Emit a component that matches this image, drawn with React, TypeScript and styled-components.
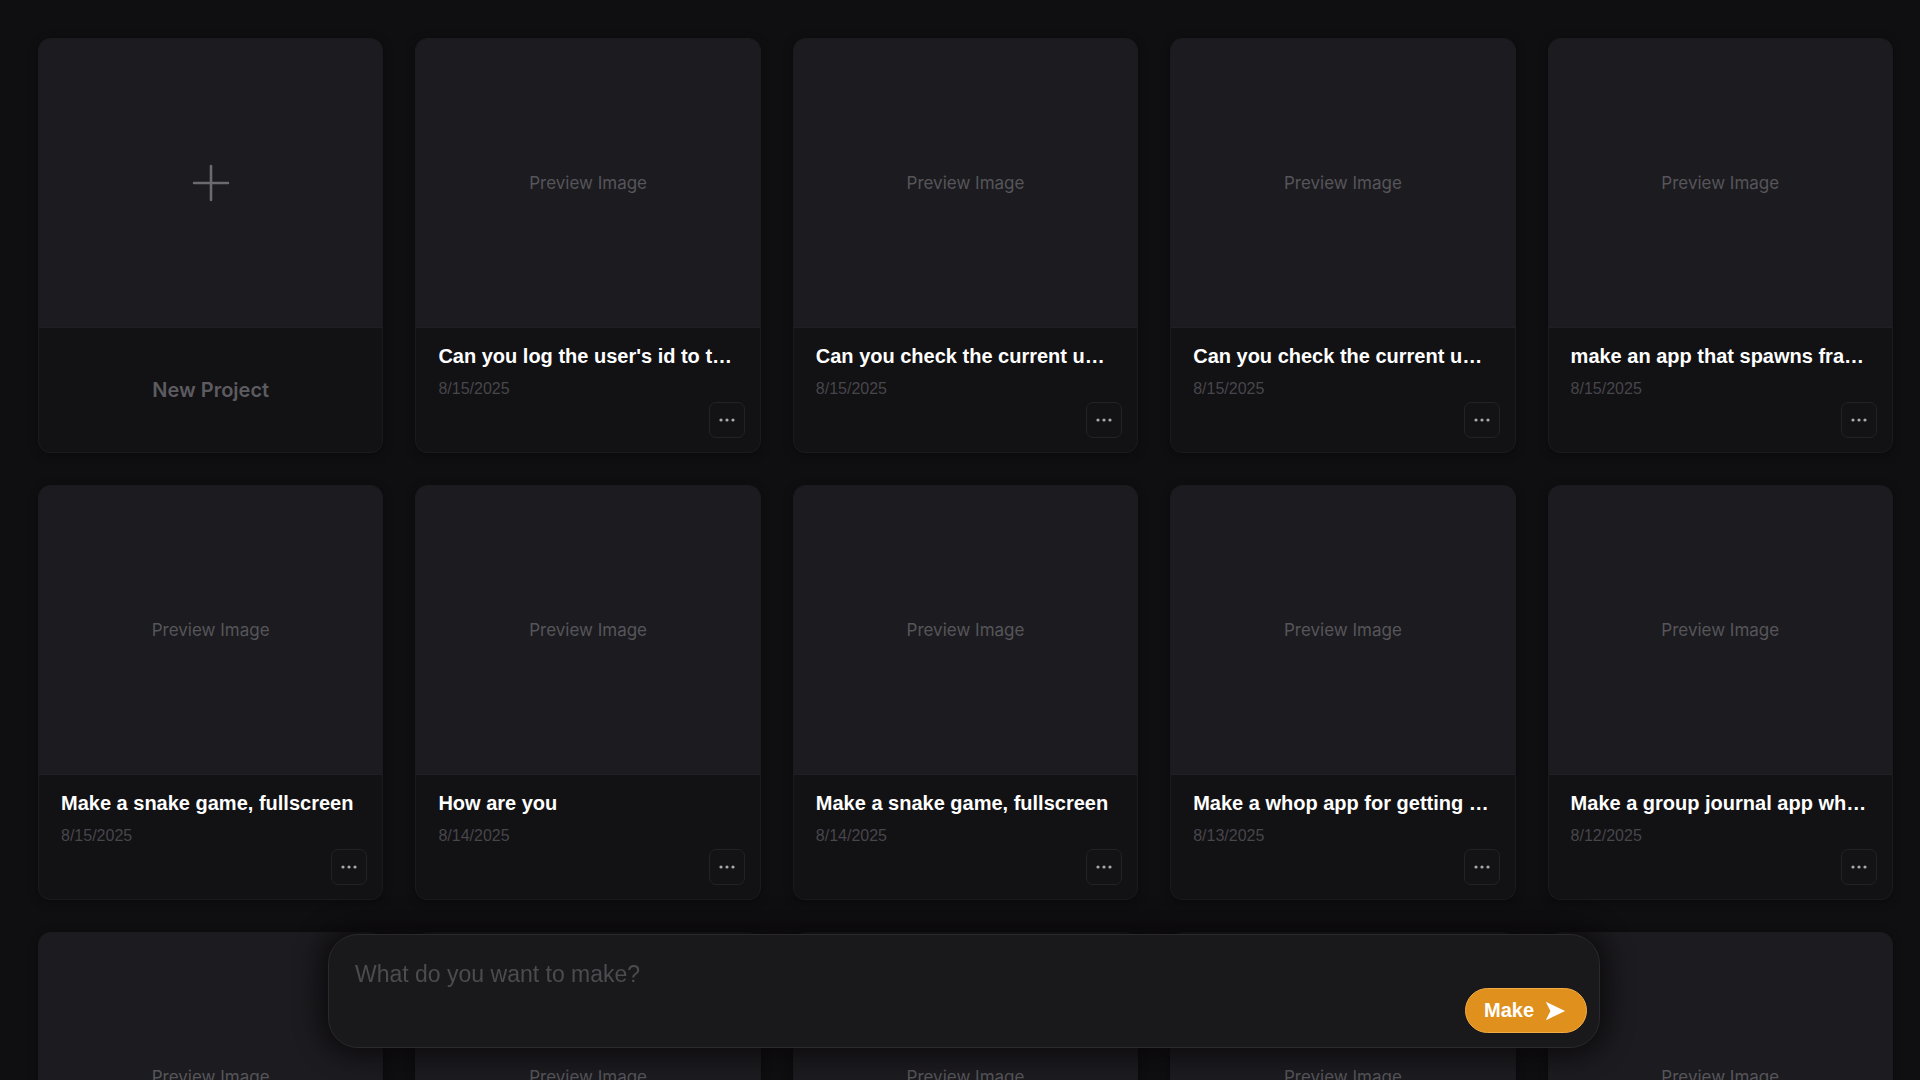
import React from "react";
import styled, { createGlobalStyle } from "styled-components";

const GlobalStyle = createGlobalStyle`
  html, body {
    margin: 0;
    padding: 0;
    background: #0f0e11;
    font-family: "Liberation Sans", Arial, sans-serif;
  }
  * { box-sizing: border-box; }
`;

const Page = styled.div`
  min-height: 100vh;
  padding: 38px 27px 160px 38px;
  background: #0f0e11;
`;

const Grid = styled.div`
  display: grid;
  grid-template-columns: repeat(5, 1fr);
  gap: 32px;
`;

const Card = styled.div`
  height: 415px;
  display: flex;
  flex-direction: column;
  border-radius: 12px;
  overflow: hidden;
  border: 1px solid #1b1a1e;
  background: #121114;
  box-shadow: 0 2px 10px rgba(0, 0, 0, 0.35);
`;

const Preview = styled.div`
  height: 289px;
  flex-shrink: 0;
  display: flex;
  align-items: center;
  justify-content: center;
  background: #1c1b1f;
  border-bottom: 1px solid #211f24;
  color: #56555a;
  font-family: Inter, "Noto Sans", sans-serif;
  font-size: 17px;
`;

const Footer = styled.div<{ $center?: boolean }>`
  flex: 1;
  display: flex;
  flex-direction: column;
  min-width: 0;
  padding: ${(p) => (p.$center ? "16px" : "16px 15px 16px 22px")};
  justify-content: ${(p) => (p.$center ? "center" : "flex-start")};
  align-items: ${(p) => (p.$center ? "center" : "stretch")};
`;

const Title = styled.div`
  color: #ffffff;
  font-weight: 700;
  font-size: 20px;
  line-height: 24px;
  padding-right: 7px;
  white-space: nowrap;
  overflow: hidden;
  text-overflow: ellipsis;
`;

const DateText = styled.div`
  margin-top: 11px;
  color: #47464b;
  font-size: 16px;
  line-height: 20px;
`;

const Actions = styled.div`
  margin-top: 3px;
  display: flex;
  justify-content: flex-end;
`;

const MenuButton = styled.button`
  width: 36px;
  height: 36px;
  display: flex;
  align-items: center;
  justify-content: center;
  padding: 0;
  border-radius: 7px;
  border: 1px solid #232226;
  background: #131215;
  cursor: pointer;
`;

const NewLabel = styled.div`
  color: #5c5b60;
  font-family: Inter, "Noto Sans", sans-serif;
  font-weight: 600;
  font-size: 20px;
`;

const Composer = styled.div`
  position: fixed;
  left: 328px;
  width: 1272px;
  bottom: 32px;
  height: 114px;
  border-radius: 30px;
  background: #19181b;
  border: 1px solid #2a292d;
  box-shadow: 0 0 24px 8px rgba(8, 7, 10, 0.75);
  display: flex;
  flex-direction: column;
  padding: 26px 12px 15px 26px;
`;

const Input = styled.input`
  border: none;
  outline: none;
  background: transparent;
  color: #ddd;
  font-family: "Liberation Sans", Arial, sans-serif;
  font-size: 23px;
  padding: 0;
  height: 28px;
  &::placeholder {
    color: #4c4b50;
  }
`;

const ComposerActions = styled.div`
  margin-top: auto;
  display: flex;
  justify-content: flex-end;
`;

const MakeButton = styled.button`
  height: 45px;
  width: 122px;
  border-radius: 23px;
  border: 1.5px solid #f2ac45;
  background: #e0901c;
  color: #fff;
  font-family: "Liberation Sans", Arial, sans-serif;
  font-weight: 700;
  font-size: 20px;
  display: flex;
  align-items: center;
  justify-content: center;
  gap: 10px;
  cursor: pointer;
  padding: 0 2px 0 0;
`;

function Dots() {
  return (
    <svg width="16" height="4" viewBox="0 0 16 4">
      <circle cx="2" cy="2" r="1.6" fill="#a9a8ad" />
      <circle cx="8" cy="2" r="1.6" fill="#a9a8ad" />
      <circle cx="14" cy="2" r="1.6" fill="#a9a8ad" />
    </svg>
  );
}

function PlusIcon() {
  return (
    <svg width="38" height="38" viewBox="0 0 38 38">
      <path d="M19 2v34M2 19h34" stroke="#6b6a6f" strokeWidth="2.6" strokeLinecap="round" />
    </svg>
  );
}

function SendIcon() {
  return (
    <svg width="22" height="22" viewBox="0 0 24 24">
      <path d="M2 2 L23 12 L2 22 L7 12 Z" fill="#fff" />
    </svg>
  );
}

const projects = [
  { title: "Can you log the user's id to the console when they open it", date: "8/15/2025" },
  { title: "Can you check the current user's access level", date: "8/15/2025" },
  { title: "Can you check the current user's plan", date: "8/15/2025" },
  { title: "make an app that spawns fractals on click", date: "8/15/2025" },
  { title: "Make a snake game, fullscreen", date: "8/15/2025" },
  { title: "How are you", date: "8/14/2025" },
  { title: "Make a snake game, fullscreen", date: "8/14/2025" },
  { title: "Make a whop app for getting feedback", date: "8/13/2025" },
  { title: "Make a group journal app where members post", date: "8/12/2025" },
  { title: "Make a todo list", date: "8/11/2025" },
  { title: "Make a leaderboard app", date: "8/11/2025" },
  { title: "Build a quiz game", date: "8/10/2025" },
  { title: "Make a chat room", date: "8/10/2025" },
  { title: "Make a countdown timer", date: "8/9/2025" },
];

function ProjectCard({ title, date }: { title: string; date: string }) {
  return (
    <Card>
      <Preview>Preview Image</Preview>
      <Footer>
        <Title>{title}</Title>
        <DateText>{date}</DateText>
        <Actions>
          <MenuButton aria-label="More">
            <Dots />
          </MenuButton>
        </Actions>
      </Footer>
    </Card>
  );
}

export default function App() {
  return (
    <>
      <GlobalStyle />
      <Page>
        <Grid>
          <Card>
            <Preview>
              <PlusIcon />
            </Preview>
            <Footer $center>
              <NewLabel>New Project</NewLabel>
            </Footer>
          </Card>
          {projects.map((p, i) => (
            <ProjectCard key={i} title={p.title} date={p.date} />
          ))}
        </Grid>
      </Page>
      <Composer>
        <Input placeholder="What do you want to make?" />
        <ComposerActions>
          <MakeButton>
            Make
            <SendIcon />
          </MakeButton>
        </ComposerActions>
      </Composer>
    </>
  );
}
